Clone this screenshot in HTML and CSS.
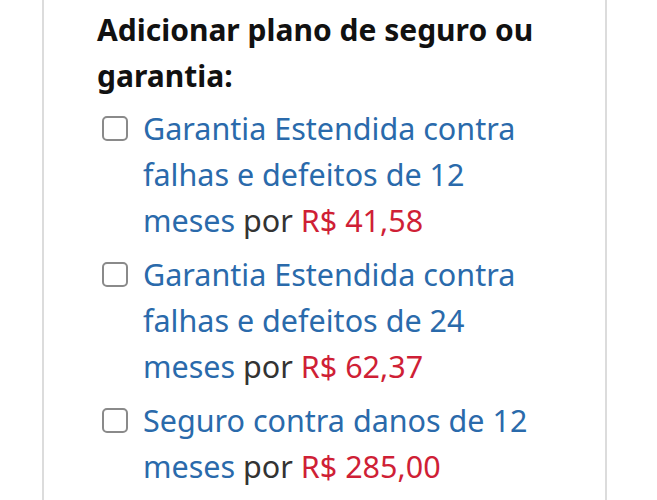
FILE: index.html
```html
<html>

<head>
    <meta charset="utf-8">
    <link rel="stylesheet" href="styles.css">
</head>

<body>
    <div class="box">
        <h3 class="title">Adicionar plano de seguro ou garantia:</h3>

        <label class="option">
            <span class="check"></span>
            <span class="option-text">
                <a class="link">Garantia Estendida contra falhas e defeitos de 12 meses</a>
                <span class="por">por</span>
                <span class="price">R$ 41,58</span>
            </span>
        </label>

        <label class="option">
            <span class="check"></span>
            <span class="option-text">
                <a class="link">Garantia Estendida contra falhas e defeitos de 24 meses</a>
                <span class="por">por</span>
                <span class="price">R$ 62,37</span>
            </span>
        </label>

        <label class="option">
            <span class="check"></span>
            <span class="option-text">
                <a class="link">Seguro contra danos de 12 meses</a>
                <span class="por">por</span>
                <span class="price">R$ 285,00</span>
            </span>
        </label>
    </div>
</body>

</html>
```

FILE: styles.css
```css
body {
    margin: 0;
    background: #fff;
    font-family: 'Noto Sans', 'Open Sans', sans-serif;
    font-size: 30.5px;
    line-height: 46px;
}

.box {
    margin-left: 42px;
    width: 565px;
    min-height: 500px;
    box-sizing: border-box;
    border-left: 2px solid #dcdcdc;
    border-right: 2px solid #dcdcdc;
    padding: 7px 52px 0 53px;
}

.title {
    margin: 0 0 6px 0;
    font-size: 30px;
    font-weight: 700;
    color: #111;
}

.option {
    display: flex;
    gap: 15px;
    margin-bottom: 8px;
    padding-left: 5px;
}

.check {
    flex: 0 0 auto;
    width: 22px;
    height: 21px;
    margin-top: 11px;
    border: 2px solid #8a8a8a;
    border-radius: 5px;
    background: #fff;
}

.link {
    color: #2a6aab;
    text-decoration: none;
}

.por {
    color: #333;
}

.price {
    color: #cf1f36;
}
```
